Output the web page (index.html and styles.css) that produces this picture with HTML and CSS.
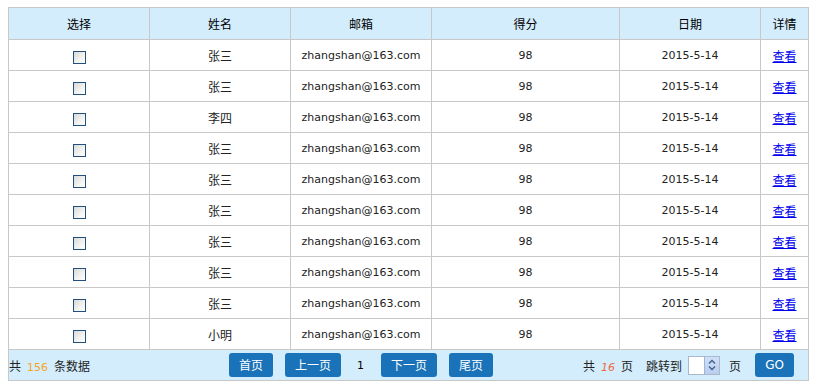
FILE: index.html
```html
<!DOCTYPE html>
<html lang="zh">
<head>
<meta charset="utf-8">
<title>列表</title>
<link rel="stylesheet" href="styles.css">
</head>
<body>
<div class="wrap">
<table class="grid">
  <thead>
    <tr><th class="c1">选择</th><th class="c2">姓名</th><th class="c3">邮箱</th><th class="c4">得分</th><th class="c5">日期</th><th class="c6">详情</th></tr>
  </thead>
  <tbody>
    <tr><td><span class="cb"></span></td><td>张三</td><td class="en">zhangshan@163.com</td><td class="en">98</td><td class="en">2015-5-14</td><td><a href="#">查看</a></td></tr>
    <tr><td><span class="cb"></span></td><td>张三</td><td class="en">zhangshan@163.com</td><td class="en">98</td><td class="en">2015-5-14</td><td><a href="#">查看</a></td></tr>
    <tr><td><span class="cb"></span></td><td>李四</td><td class="en">zhangshan@163.com</td><td class="en">98</td><td class="en">2015-5-14</td><td><a href="#">查看</a></td></tr>
    <tr><td><span class="cb"></span></td><td>张三</td><td class="en">zhangshan@163.com</td><td class="en">98</td><td class="en">2015-5-14</td><td><a href="#">查看</a></td></tr>
    <tr><td><span class="cb"></span></td><td>张三</td><td class="en">zhangshan@163.com</td><td class="en">98</td><td class="en">2015-5-14</td><td><a href="#">查看</a></td></tr>
    <tr><td><span class="cb"></span></td><td>张三</td><td class="en">zhangshan@163.com</td><td class="en">98</td><td class="en">2015-5-14</td><td><a href="#">查看</a></td></tr>
    <tr><td><span class="cb"></span></td><td>张三</td><td class="en">zhangshan@163.com</td><td class="en">98</td><td class="en">2015-5-14</td><td><a href="#">查看</a></td></tr>
    <tr><td><span class="cb"></span></td><td>张三</td><td class="en">zhangshan@163.com</td><td class="en">98</td><td class="en">2015-5-14</td><td><a href="#">查看</a></td></tr>
    <tr><td><span class="cb"></span></td><td>张三</td><td class="en">zhangshan@163.com</td><td class="en">98</td><td class="en">2015-5-14</td><td><a href="#">查看</a></td></tr>
    <tr><td><span class="cb"></span></td><td>小明</td><td class="en">zhangshan@163.com</td><td class="en">98</td><td class="en">2015-5-14</td><td><a href="#">查看</a></td></tr>
  </tbody>
</table>
<div class="pager">
  <div class="total">共<span class="count">156</span>条数据</div>
  <div class="nav">
    <button class="btn">首页</button>
    <button class="btn">上一页</button>
    <span class="cur">1</span>
    <button class="btn">下一页</button>
    <button class="btn">尾页</button>
  </div>
  <div class="jump">
    <span>共<span class="pages">16</span>页</span>
    <span class="lbl">跳转到</span>
    <span class="num"><span class="field"></span><span class="spin"><svg width="8" height="12" viewBox="0 0 8 12"><path d="M1 4.5 L4 1.5 L7 4.5" fill="none" stroke="#41618a" stroke-width="1.4"/><path d="M1 7.5 L4 10.5 L7 7.5" fill="none" stroke="#41618a" stroke-width="1.4"/></svg></span></span>
    <span class="lbl2">页</span>
    <button class="btn go">GO</button>
  </div>
</div>
</div>
</body>
</html>
```

FILE: styles.css
```css
html, body {
  overflow: hidden;
}
body {
  margin: 7px 0 0 8px;
  font-family: "Noto Sans CJK SC", "DejaVu Sans", sans-serif;
  font-size: 12px;
  color: #222;
  background: #fff;
}
.wrap {
  width: 801px;
}
.grid {
  width: 801px;
  border-collapse: separate;
  border-spacing: 0;
  table-layout: fixed;
  border-left: 1px solid #c8c8c8;
  border-top: 1px solid #c8c8c8;
}
.grid th, .grid td {
  box-sizing: border-box;
  border-right: 1px solid #c8c8c8;
  border-bottom: 1px solid #c8c8c8;
  text-align: center;
  padding: 0;
  white-space: nowrap;
}
.c1, .c2, .c3, .c5 { width: 141px; }
.c4 { width: 188px; }
.c6 { width: 48px; }
.grid th {
  background: #d3edfd;
  height: 32px;
  font-weight: normal;
  color: #000;
  font-size: 12px;
}
.grid td {
  height: 31px;
  color: #222;
}
.grid td.en {
  font-family: "DejaVu Sans", sans-serif;
  font-size: 11px;
}
.cb {
  display: inline-block;
  width: 11px;
  height: 11px;
  border: 1px solid #234f7c;
  background: linear-gradient(135deg, #d9d9d6 0%, #f3f3f1 60%, #ffffff 100%);
  vertical-align: middle;
  margin-left: 1px;
}
.grid a {
  color: #0000ee;
  text-decoration: underline;
}
.pager {
  box-sizing: border-box;
  display: flex;
  align-items: center;
  height: 31px;
  background: #d3edfd;
  border: 1px solid #c8c8c8;
  border-top: none;
  color: #222;
}
.total {
  width: 220px;
}
.count {
  color: #f5a623;
  font-family: "DejaVu Sans", sans-serif;
  font-size: 11px;
  margin: 0 6px;
}
.nav {
  display: flex;
  align-items: center;
}
.btn {
  height: 24px;
  padding: 0 10px;
  border: none;
  border-radius: 3px;
  background: #1a73b8;
  color: #fff;
  font-family: "Noto Sans CJK SC", "DejaVu Sans", sans-serif;
  font-size: 12px;
  line-height: 24px;
  margin-right: 12px;
}
.nav .btn:last-child { margin-right: 0; }
.cur {
  margin: 0 17px 0 4px;
  font-family: "DejaVu Sans", sans-serif;
  font-size: 11px;
  color: #000;
}
.jump {
  display: flex;
  align-items: center;
  margin-left: auto;
  margin-right: 14px;
}
.pages {
  color: #f06a3c;
  font-style: italic;
  font-family: "DejaVu Sans", sans-serif;
  font-size: 11px;
  margin: 0 6px;
}
.lbl { margin-left: 13px; }
.num {
  display: flex;
  margin-left: 6px;
  width: 30px;
  height: 17px;
  border: 1px solid #a9b8cc;
  background: #fff;
}
.field { flex: 1; }
.spin {
  width: 14px;
  display: flex;
  align-items: center;
  justify-content: center;
  background: linear-gradient(#cfe0f7, #b9cdee);
  border-left: 1px solid #9fb5d8;
}
.lbl2 { margin-left: 9px; margin-right: 14px; }
.go {
  margin-right: 0;
  width: 39px;
  padding: 0;
  font-family: "DejaVu Sans", sans-serif;
}
```
